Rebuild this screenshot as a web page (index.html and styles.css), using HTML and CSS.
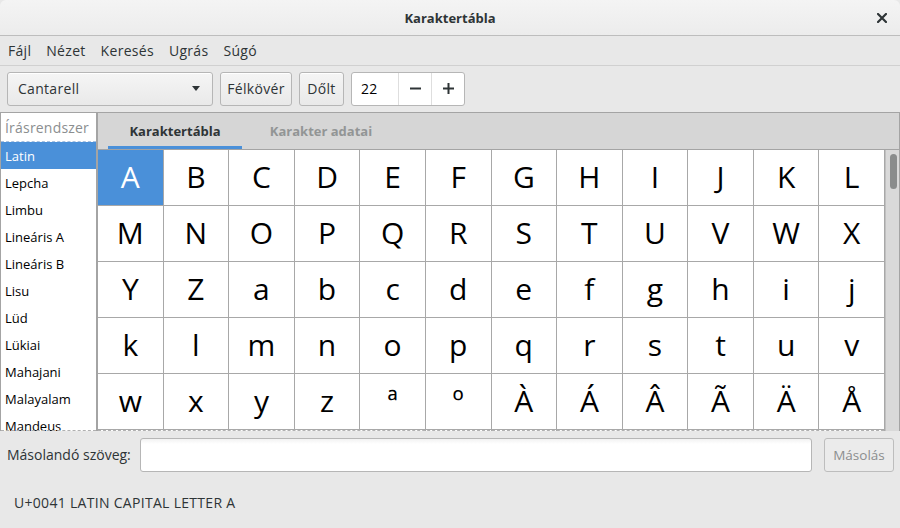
FILE: index.html
```html
<!DOCTYPE html>
<html lang="hu">
<head>
<meta charset="utf-8">
<title>Karaktertábla</title>
<link rel="stylesheet" href="styles.css">
</head>
<body>
<div class="window">
  <header class="titlebar">
    <span class="title">Karaktertábla</span>
    <span class="close">
      <svg width="10" height="10" viewBox="0 0 10 10"><path d="M1 1 L9 9 M9 1 L1 9" stroke="#2e3436" stroke-width="2.2" stroke-linecap="square"/></svg>
    </span>
  </header>
  <nav class="menubar">
    <span class="menu-item">Fájl</span>
    <span class="menu-item">Nézet</span>
    <span class="menu-item">Keresés</span>
    <span class="menu-item">Ugrás</span>
    <span class="menu-item">Súgó</span>
  </nav>
  <div class="toolbar">
    <div class="combo">
      <span class="combo-text">Cantarell</span>
      <svg class="combo-arrow" width="8" height="5" viewBox="0 0 8 5"><path d="M0 0 H8 L4 5 Z" fill="#2e3436"/></svg>
    </div>
    <button class="btn btn-bold">Félkövér</button>
    <button class="btn btn-italic">Dőlt</button>
    <div class="spin">
      <span class="spin-value">22</span>
      <span class="spin-btn"><svg width="11" height="11" viewBox="0 0 11 11"><path d="M0 5.5 H11" stroke="#2e3436" stroke-width="2"/></svg></span>
      <span class="spin-btn"><svg width="11" height="11" viewBox="0 0 11 11"><path d="M0 5.5 H11 M5.5 0 V11" stroke="#2e3436" stroke-width="2"/></svg></span>
    </div>
  </div>
  <main class="content">
    <aside class="sidebar">
      <div class="side-head">Írásrendszer</div>
      <ul class="script-list">
        <li class="selected">Latin</li>
        <li>Lepcha</li>
        <li>Limbu</li>
        <li>Lineáris A</li>
        <li>Lineáris B</li>
        <li>Lisu</li>
        <li>Lüd</li>
        <li>Lükiai</li>
        <li>Mahajani</li>
        <li>Malayalam</li>
        <li>Mandeus</li>
        <li>Manichaeus</li>
      </ul>
    </aside>
    <section class="notebook">
      <div class="tabs">
        <span class="tab active">Karaktertábla</span>
        <span class="tab">Karakter adatai</span>
      </div>
      <div class="grid-area">
        <div class="char-grid">
          <span class="cell selected">A</span><span class="cell">B</span><span class="cell">C</span><span class="cell">D</span><span class="cell">E</span><span class="cell">F</span><span class="cell">G</span><span class="cell">H</span><span class="cell">I</span><span class="cell">J</span><span class="cell">K</span><span class="cell">L</span>
          <span class="cell">M</span><span class="cell">N</span><span class="cell">O</span><span class="cell">P</span><span class="cell">Q</span><span class="cell">R</span><span class="cell">S</span><span class="cell">T</span><span class="cell">U</span><span class="cell">V</span><span class="cell">W</span><span class="cell">X</span>
          <span class="cell">Y</span><span class="cell">Z</span><span class="cell">a</span><span class="cell">b</span><span class="cell">c</span><span class="cell">d</span><span class="cell">e</span><span class="cell">f</span><span class="cell">g</span><span class="cell">h</span><span class="cell">i</span><span class="cell">j</span>
          <span class="cell">k</span><span class="cell">l</span><span class="cell">m</span><span class="cell">n</span><span class="cell">o</span><span class="cell">p</span><span class="cell">q</span><span class="cell">r</span><span class="cell">s</span><span class="cell">t</span><span class="cell">u</span><span class="cell">v</span>
          <span class="cell">w</span><span class="cell">x</span><span class="cell">y</span><span class="cell">z</span><span class="cell">ª</span><span class="cell">º</span><span class="cell">À</span><span class="cell">Á</span><span class="cell">Â</span><span class="cell">Ã</span><span class="cell">Ä</span><span class="cell">Å</span>
          <span class="cell">Æ</span><span class="cell">Ç</span><span class="cell">È</span><span class="cell">É</span><span class="cell">Ê</span><span class="cell">Ë</span><span class="cell">Ì</span><span class="cell">Í</span><span class="cell">Î</span><span class="cell">Ï</span><span class="cell">Ð</span><span class="cell">Ñ</span>
        </div>
        <div class="scrollbar"><div class="slider"></div></div>
      </div>
    </section>
  </main>
  <div class="copy-row">
    <label class="copy-label">Másolandó szöveg:</label>
    <div class="entry"></div>
    <button class="btn btn-copy" disabled>Másolás</button>
  </div>
  <div class="status">U+0041 LATIN CAPITAL LETTER A</div>
</div>
</body>
</html>
```

FILE: styles.css
```css
* { box-sizing: border-box; }
html, body { margin: 0; padding: 0; }
body {
  width: 900px;
  height: 528px;
  overflow: hidden;
  background: #e8e8e8;
  font-family: "Open Sans", "Noto Sans", sans-serif;
  font-size: 14px;
  letter-spacing: 0.3px;
  color: #2e3436;
}
.window {
  width: 900px;
  height: 528px;
  display: flex;
  flex-direction: column;
  background: #e8e8e8;
  border-radius: 6px 6px 0 0;
  overflow: hidden;
}
.titlebar {
  height: 36px;
  flex: none;
  display: flex;
  align-items: center;
  justify-content: center;
  position: relative;
  background: linear-gradient(#f4f4f4, #ececec);
  border-bottom: 1px solid #bdbdbd;
}
.title { font-weight: 700; font-size: 13px; letter-spacing: 0; color: #2e3436; }
.close {
  position: absolute;
  right: 13px;
  top: 13px;
  width: 10px;
  height: 10px;
  display: flex;
}
.menubar {
  height: 30px;
  flex: none;
  display: flex;
  align-items: center;
  padding-left: 8px;
  gap: 15px;
  border-bottom: 1px solid #d0d0d0;
}
.menu-item { color: #2e3436; }
.toolbar {
  height: 47px;
  flex: none;
  display: flex;
  align-items: center;
  padding: 0 7px 1px 7px;
  gap: 7px;
  border-bottom: 1px solid #a4a4a4;
}
.combo, .btn {
  height: 34px;
  border: 1px solid #b6b6b6;
  border-radius: 3px;
  background: linear-gradient(#f5f5f5, #e9e9e9);
  box-shadow: inset 0 1px #ffffff;
  font-family: inherit;
  font-size: 14px;
  letter-spacing: 0.3px;
  color: #2e3436;
}
.combo {
  width: 206px;
  display: flex;
  align-items: center;
  justify-content: space-between;
  padding: 0 12px 0 10px;
}
.btn { padding: 0; }
.btn-bold { width: 72px; }
.btn-italic { width: 45px; }
.spin {
  display: flex;
  width: 114px;
  height: 34px;
  border: 1px solid #b6b6b6;
  border-radius: 3px;
  background: #ffffff;
}
.spin-value {
  flex: 1;
  display: flex;
  align-items: center;
  padding-left: 9px;
  color: #000;
}
.spin-btn {
  width: 33px;
  display: flex;
  align-items: center;
  justify-content: center;
  border-left: 1px solid #dedede;
}
.content {
  height: 318px;
  flex: none;
  display: flex;
}
.sidebar {
  width: 97px;
  flex: none;
  background: #ffffff;
  border-left: 1px solid #a4a4a4;
  border-right: 1px solid #a4a4a4;
  overflow: hidden;
  position: relative;
  font-size: 13px;
  letter-spacing: 0;
}
.sidebar::after, .grid-area::after {
  content: "";
  position: absolute;
  left: 0;
  right: 0;
  bottom: 0;
  border-bottom: 1px dashed #b0b0b0;
}
.side-head {
  height: 29px;
  display: flex;
  align-items: center;
  padding-left: 4px;
  color: #8b8e8f;
  font-size: 14px;
  letter-spacing: 0.2px;
  border-bottom: 1px dashed #a9c2e0;
}
.script-list {
  list-style: none;
  margin: 0;
  padding: 0;
}
.script-list li {
  height: 27px;
  display: flex;
  align-items: center;
  padding-left: 4px;
  color: #000;
}
.script-list li.selected { background: #4a90d9; color: #fff; }
.notebook {
  flex: 1;
  display: flex;
  flex-direction: column;
  border-left: 1px solid #a4a4a4;
  border-right: 1px solid #a4a4a4;
  min-width: 0;
}
.tabs {
  height: 37px;
  flex: none;
  display: flex;
  padding-left: 10px;
  background: #d6d6d6;
  border-bottom: 1px solid #a4a4a4;
  font-size: 13px;
  letter-spacing: 0;
}
.tab {
  width: 134px;
  display: flex;
  align-items: center;
  justify-content: center;
  font-weight: 700;
  color: #929595;
  border-bottom: 3px solid transparent;
  padding-top: 3px;
  margin-right: 12px;
}
.tab.active { color: #2e3436; border-bottom-color: #4a90d9; }
.grid-area {
  flex: 1;
  display: flex;
  overflow: hidden;
  position: relative;
  background: #ffffff;
}
.char-grid {
  width: 787px;
  flex: none;
  display: grid;
  grid-template-columns: repeat(12, 1fr);
  grid-auto-rows: 56px;
  align-content: start;
}
.cell {
  display: flex;
  align-items: center;
  justify-content: center;
  border-right: 1px solid #a8a8a8;
  border-bottom: 1px solid #a8a8a8;
  font-size: 30px;
  letter-spacing: 0;
  color: #000;
  padding-bottom: 2px;
}
.cell.selected { background: #4a90d9; color: #fff; }
.scrollbar {
  flex: 1;
  background: #d9d9d9;
  border-left: 1px solid #c0c0c0;
  position: relative;
  z-index: 1;
}
.slider {
  position: absolute;
  top: 4px;
  left: 4px;
  width: 7px;
  height: 35px;
  border-radius: 4px;
  background: #8a8c8c;
}
.copy-row {
  height: 47px;
  flex: none;
  display: flex;
  align-items: center;
  padding: 0 7px;
}
.copy-label { width: 133px; flex: none; white-space: nowrap; letter-spacing: 0; }
.entry {
  width: 672px;
  height: 34px;
  flex: none;
  border: 1px solid #b6b6b6;
  border-radius: 3px;
  background: linear-gradient(#f2f2f2, #ffffff 5px);
}
.btn-copy {
  margin-left: 12px;
  width: 70px;
  flex: none;
  color: #8b8e8f;
  background: #ebebeb;
  border-color: #bdbdbd;
  box-shadow: none;
  font-size: 13.5px;
  letter-spacing: 0;
}
.status {
  flex: 1;
  padding: 15px 0 0 14px;
  color: #2e3436;
}
```
